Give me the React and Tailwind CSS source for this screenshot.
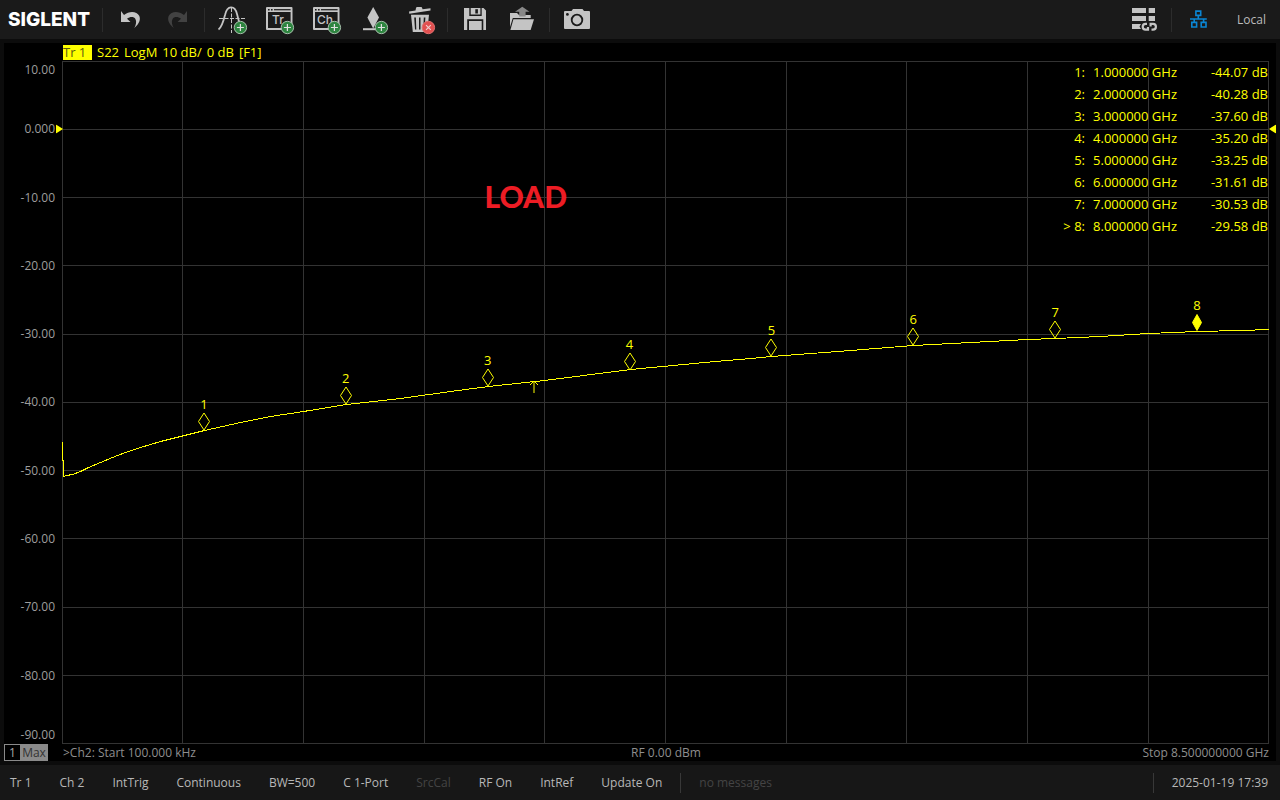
const MARKERS = [
  { id: 1, freq: 1, value: -44.07 },
  { id: 2, freq: 2, value: -40.28 },
  { id: 3, freq: 3, value: -37.6 },
  { id: 4, freq: 4, value: -35.2 },
  { id: 5, freq: 5, value: -33.25 },
  { id: 6, freq: 6, value: -31.61 },
  { id: 7, freq: 7, value: -30.53 },
  { id: 8, freq: 8, value: -29.58, active: true },
];

const Y_LABELS = ['10.00', '0.000', '-10.00', '-20.00', '-30.00', '-40.00', '-50.00', '-60.00', '-70.00', '-80.00', '-90.00'];

// plot coordinates, 1207 x 683
const GRID_X = [0, 120, 241, 362, 482, 603, 724, 844, 965, 1086, 1206];
const GRID_Y = [0, 68, 136, 204, 273, 341, 409, 477, 546, 614, 682];

const TRACE = [
  [0, 380], [0, 399], [1, 399], [1, 415], [4, 414], [10, 413], [18, 410], [26, 406], [38, 401], [50, 396],
  [63, 391], [78, 386], [98, 380], [118, 375], [142, 369], [178, 361], [208, 355], [241, 350], [284, 343],
  [338, 337], [388, 330], [426, 325], [482, 319], [568, 308], [653, 300], [688, 297], [709, 295], [788, 289],
  [851, 284], [908, 281], [965, 278], [993, 277], [1038, 275], [1086, 272], [1135, 270], [1178, 269], [1207, 268],
];

const STATUS = [
  { label: 'Tr 1' },
  { label: 'Ch 2' },
  { label: 'IntTrig' },
  { label: 'Continuous' },
  { label: 'BW=500' },
  { label: 'C 1-Port' },
  { label: 'SrcCal', disabled: true },
  { label: 'RF On' },
  { label: 'IntRef' },
  { label: 'Update On' },
];

const STOP = 8.5;
const REF_TOP = 10;
const SPAN = 100;

function Icon({ children }) {
  return (
    <svg width="33" height="33" viewBox="0 0 33 33" fill="currentColor" aria-hidden="true">
      {children}
    </svg>
  );
}

function AddBadge() {
  return (
    <g>
      <circle cx="24.4" cy="24.5" r="6.2" fill="#2e8540" stroke="#a8bfac" strokeWidth="1" />
      <path d="M24.4 21v7M20.9 24.5h7" stroke="#e0e0e0" strokeWidth="1.2" />
    </g>
  );
}

function UndoIcon() {
  return (
    <Icon>
      <path d="M7 8V19H16.5L13 15.7C16 13.4 20 13.4 21.4 16C22.8 18.6 22 22 20.3 25C25.6 20.5 26.8 16.4 25.2 12.8C23 8.4 15.5 7.6 10 12Z" />
    </Icon>
  );
}

function RedoIcon() {
  return (
    <Icon>
      <path transform="translate(33 0) scale(-1 1)" d="M7 8V19H16.5L13 15.7C16 13.4 20 13.4 21.4 16C22.8 18.6 22 22 20.3 25C25.6 20.5 26.8 16.4 25.2 12.8C23 8.4 15.5 7.6 10 12Z" />
    </Icon>
  );
}

function TraceAddIcon() {
  return (
    <Icon>
      <path d="M15.5 5V30" stroke="currentColor" strokeWidth="1" strokeDasharray="4 1.5" />
      <path d="M3 15.5H29" stroke="currentColor" strokeWidth="1" strokeDasharray="4 1.5" />
      <path d="M2.5 26.5C5.5 24.5 7.5 18 9 12C11.2 2 18.8 2 21 11C22.5 18 24.5 25 29 26.5" fill="none" stroke="currentColor" strokeWidth="1.8" />
      <AddBadge />
    </Icon>
  );
}

function WindowAddIcon({ text }) {
  return (
    <Icon>
      <path fillRule="evenodd" d="M4 4H28.5Q29.5 4 29.5 5V26Q29.5 27 28.5 27H4Q3 27 3 26V5Q3 4 4 4ZM5 9V25H27.6V9Z" />
      <path d="M5 6h1.6v1.4H5zM8 6h1.6v1.4H8z" fill="#1a1a1a" />
      <path d="M11 6.7H27.6" stroke="#1a1a1a" strokeWidth="1.2" />
      <text x="15" y="21" textAnchor="middle" className="text-[12px] font-medium font-['Inter',sans-serif]">{text}</text>
      <AddBadge />
    </Icon>
  );
}

function MarkerAddIcon() {
  return (
    <Icon>
      <path d="M16.2 4L22 14.5L16.2 25.5L10.4 14.5Z" />
      <path d="M6 25.2H20V27.2H6Z" />
      <AddBadge />
    </Icon>
  );
}

function TrashIcon() {
  return (
    <Icon>
      <path d="M5 8.6L11.5 7.5L12 5Q12.2 4 13.2 4H17Q18 4 18.2 5L18.5 6.3L26.5 5.2V7.6L5.3 10.8Z" />
      <path fillRule="evenodd" d="M7 11.8H25L23.2 29H8.8ZM10.2 14.5L11 26.5H12.3L11.9 14.5ZM15 14.5V26.5H16.5V14.5ZM19.8 14.5L19.3 26.5H20.6L21.4 14.5Z" />
      <circle cx="24.4" cy="24.5" r="6.2" fill="#e25050" stroke="#e07070" strokeWidth="1" />
      <path d="M22 22.1l4.8 4.8M26.8 22.1L22 26.9" stroke="#f0d0d0" strokeWidth="1.1" />
    </Icon>
  );
}

function SaveIcon() {
  return (
    <Icon>
      <path fillRule="evenodd" d="M5 5H24.5L27 7.5V27H24.3V16.2H8.2V27H5ZM10.3 5V13H22.7V5H21.4V11.6H11.7V5Z" />
      <path d="M16.3 6.2h2.6v4.3h-2.6z" fill="#1a1a1a" />
      <path d="M10 18H22.7V27H10Z" />
    </Icon>
  );
}

function OpenIcon() {
  return (
    <Icon>
      <path d="M4 10H11L13 12H24.7V15H6.8L4 24Z" />
      <path d="M7.4 16.3H28L24.6 27H4.4Z" />
      <path d="M16.3 3.7L23.5 8.8H19.6V13.6H13.2V8.8H9Z" fill="#888" />
    </Icon>
  );
}

function CameraIcon() {
  return (
    <Icon>
      <path d="M4 8H10.5L12 6H21.5L23 8H28Q29 8 29 9V25Q29 26 28 26H4Q3 26 3 25V9Q3 8 4 8Z" />
      <circle cx="16" cy="17" r="5.3" fill="none" stroke="#1a1a1a" strokeWidth="1.8" />
      <circle cx="6.4" cy="11.4" r="1.4" fill="#1a1a1a" />
    </Icon>
  );
}

function LinkedListIcon() {
  return (
    <Icon>
      <path d="M4 5h14v5H4zM20.7 5H27v5h-6.3zM4 13h14v5H4zM20.7 13H27v5h-6.3zM4 21h9l-1.5 2.4L13 26H4z" />
      <path d="M19 20.9H17.6A2.9 2.9 0 0 0 17.6 26.7H20V24M23.5 26.7H25A2.9 2.9 0 0 0 25 20.9H22.6V23.6" fill="none" stroke="currentColor" strokeWidth="2.2" />
    </Icon>
  );
}

function NetworkIcon() {
  return (
    <Icon>
      <path d="M12.9 8.1h4.8v4.3h-4.8zM8.8 19.4h4.8v4.6H8.8zM18.2 19.4H23V24h-4.8zM7 16H23.8M15.3 12.4V16M11.2 16V19.4M20.6 16V19.4" fill="none" stroke="currentColor" strokeWidth="1.6" />
    </Icon>
  );
}

function ToolButton({ label, children, className = 'text-[#c4c4c4]', disabled }) {
  return (
    <button type="button" aria-label={label} disabled={disabled} className={`flex h-full w-[47px] shrink-0 items-center justify-center ${className}`}>
      {children}
    </button>
  );
}

function Divider() {
  return <span className="ml-[3px] mr-1 h-6 w-px shrink-0 bg-[#2c2c2c]" />;
}

function Toolbar() {
  return (
    <header className="flex h-[39px] shrink-0 items-center bg-[#1a1a1a]">
      <span className="w-[99px] shrink-0 pl-2 font-['Inter',sans-serif] text-[19px] font-extrabold leading-6 text-white">SIGLENT</span>
      <Divider />
      <ToolButton label="Undo"><UndoIcon /></ToolButton>
      <ToolButton label="Redo" disabled className="text-[#424242]"><RedoIcon /></ToolButton>
      <Divider />
      <ToolButton label="Add trace"><TraceAddIcon /></ToolButton>
      <ToolButton label="Add trace window"><WindowAddIcon text="Tr" /></ToolButton>
      <ToolButton label="Add channel"><WindowAddIcon text="Ch" /></ToolButton>
      <ToolButton label="Add marker"><MarkerAddIcon /></ToolButton>
      <ToolButton label="Delete"><TrashIcon /></ToolButton>
      <Divider />
      <ToolButton label="Save"><SaveIcon /></ToolButton>
      <ToolButton label="Open"><OpenIcon /></ToolButton>
      <Divider />
      <ToolButton label="Screenshot"><CameraIcon /></ToolButton>
      <div className="ml-auto flex h-full items-center">
        <ToolButton label="Linked windows"><LinkedListIcon /></ToolButton>
        <Divider />
        <ToolButton label="Network" className="text-[#0a86d4]"><NetworkIcon /></ToolButton>
        <button type="button" className="px-[14px] text-[#bcbcbc]">Local</button>
      </div>
    </header>
  );
}

function MarkerTable() {
  return (
    <table className="absolute right-0 top-0 text-[13px] leading-[22px] text-[#ffff00]">
      <tbody>
        {MARKERS.map((m) => (
          <tr key={m.id}>
            <td className="p-0 text-right">{m.active ? '> ' : ''}{m.id}:</td>
            <td className="py-0 pl-2 pr-0">{m.freq.toFixed(6)} GHz</td>
            <td className="w-[92px] py-0 pl-0 pr-px text-right">{m.value.toFixed(2)} dB</td>
          </tr>
        ))}
      </tbody>
    </table>
  );
}

function PlotMarker({ id, freq, value, active }) {
  const left = `${(freq / STOP) * 100}%`;
  const top = `${((REF_TOP - value) / SPAN) * 100}%`;
  return (
    <div className="absolute flex -translate-x-1/2 -translate-y-full flex-col items-center text-[#ffff00]" style={{ left, top }}>
      <span className="text-[13px] leading-4">{id}</span>
      <svg width="12" height="18" viewBox="0 0 12 18" className="block">
        <path d={active ? 'M6 1.5L10.5 9.5L6 17.5L1.5 9.5Z' : 'M6 1L11.5 9.5L6 18L0.5 9.5Z'} fill={active ? 'currentColor' : 'none'} stroke="currentColor" strokeWidth="1" />
      </svg>
    </div>
  );
}

function Plot() {
  return (
    <div className="relative min-w-0 flex-1">
      <svg viewBox="0 0 1207 683" preserveAspectRatio="none" className="absolute inset-0 h-full w-full" shapeRendering="crispEdges">
        {GRID_X.map((x) => <rect key={x} x={x} y="0" width="1" height="683" fill="#333" />)}
        {GRID_Y.map((y) => <rect key={y} x="0" y={y} width="1207" height="1" fill="#333" />)}
        <polyline
          points={TRACE.map(([x, y]) => `${x + 0.5},${y + 0.5}`).join(' ')}
          fill="none"
          stroke="#ffff00"
          strokeWidth="1"
          vectorEffect="non-scaling-stroke"
        />
      </svg>
      <div className="absolute inset-0 right-px">
        {MARKERS.map((m) => <PlotMarker key={m.id} {...m} />)}
      </div>
      <svg width="11" height="13" viewBox="0 0 11 13" className="absolute left-[39.1%] top-[46.7%] -translate-x-1/2" fill="none" stroke="#ffff00">
        <path d="M5.5 13V1M1.5 5L5.5 1L9.5 5" />
      </svg>
      <span className="absolute left-[35%] top-[17.2%] font-['Lato',sans-serif] text-[30px] font-black leading-9 text-[#ed1c24]">LOAD</span>
      <MarkerTable />
      <svg width="7" height="9" viewBox="0 0 7 9" className="absolute -left-1.5 top-[9.9%] -translate-y-1/2" fill="#ffff00">
        <path d="M0 0L7 4.5L0 9Z" />
      </svg>
      <svg width="7" height="9" viewBox="0 0 7 9" className="absolute -right-[7px] top-[9.9%] -translate-y-1/2" fill="#ffff00">
        <path d="M7 0L0 4.5L7 9Z" />
      </svg>
    </div>
  );
}

function YAxis() {
  return (
    <div className="flex w-[58px] shrink-0 flex-col pr-[7px] text-right text-[#9d9d9d]">
      {Y_LABELS.map((label, i) => {
        const first = i === 0;
        const last = i === Y_LABELS.length - 1;
        const place = first ? 'flex-1 items-start' : last ? 'flex-1 items-end' : 'flex-2 items-center';
        return (
          <div key={label} className={`flex min-h-0 justify-end leading-[18px] ${place}`}>{label}</div>
        );
      })}
    </div>
  );
}

function StatusBar() {
  return (
    <footer className="flex h-[35px] shrink-0 items-center bg-[#171717] pl-[10px] pr-3 text-[#b8b8b8]">
      <div className="flex items-center gap-7 whitespace-nowrap">
        {STATUS.map(({ label, disabled }) => (
          <button key={label} type="button" disabled={disabled} className="disabled:text-[#444]">{label}</button>
        ))}
      </div>
      <span className="mx-[18px] h-5 w-px bg-[#383838]" />
      <span className="text-[#444]">no messages</span>
      <span className="ml-auto mr-[18px] h-5 w-px bg-[#383838]" />
      <time>2025-01-19 17:39</time>
    </footer>
  );
}

export default function App() {
  return (
    <div className="flex h-screen flex-col overflow-hidden bg-[#0c0c0c] font-['Open_Sans','Noto_Sans',sans-serif] text-[12px] leading-4">
      <Toolbar />
      <main className="flex min-h-0 flex-1 flex-col p-1">
        <section className="flex min-h-0 flex-1 flex-col bg-black">
          <div className="flex h-[18px] shrink-0 items-center pl-[59px] text-[13px] text-[#ffff00]">
            <span className="mr-[5px] w-[29px] bg-[#ffff00] leading-[15px] text-[#5c5c10]">Tr 1</span>
            <span className="flex gap-[5px]">
              <span>S22</span>
              <span>LogM</span>
              <span>10 dB/</span>
              <span>0 dB</span>
              <span>[F1]</span>
            </span>
          </div>
          <div className="flex min-h-0 flex-1 pr-[7px]">
            <YAxis />
            <Plot />
          </div>
          <div className="flex h-[17px] shrink-0 items-center pr-[7px] text-[#8e8e8e]">
            <div className="flex w-[59px] shrink-0">
              <span className="w-4 border border-r-0 border-[#8a8a8a] text-center leading-[15px] text-[#a8a8a8]">1</span>
              <span className="w-7 bg-[#8a8a8a] text-center leading-[17px] text-[#333]">Max</span>
            </div>
            <div className="grid flex-1 grid-cols-3">
              <span>&gt;Ch2: Start 100.000 kHz</span>
              <span className="text-center">RF 0.00 dBm</span>
              <span className="text-right">Stop 8.500000000 GHz</span>
            </div>
          </div>
        </section>
      </main>
      <StatusBar />
    </div>
  );
}
